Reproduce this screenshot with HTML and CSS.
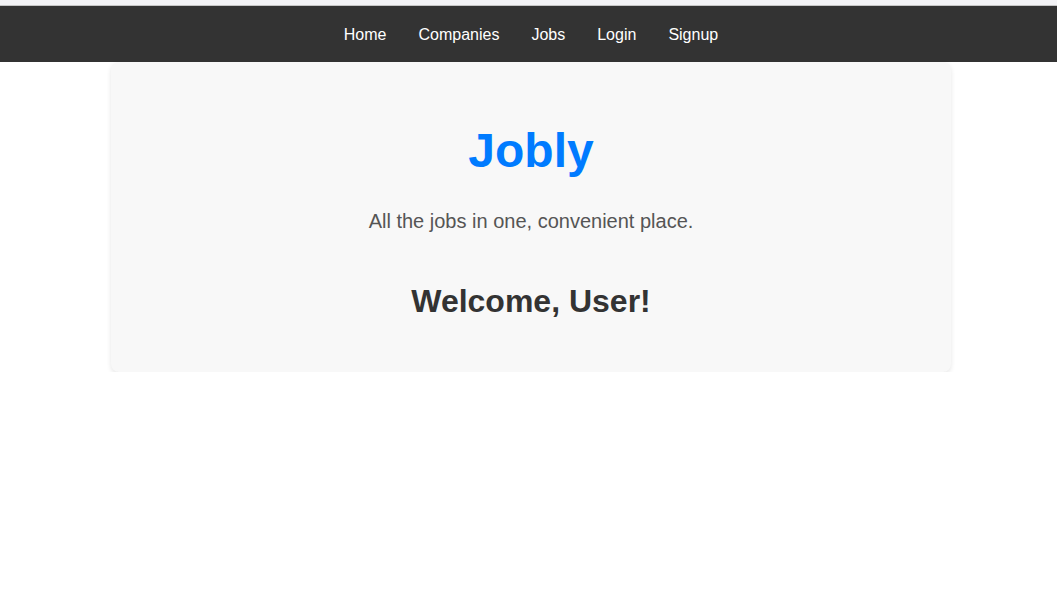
FILE: index.html
```html
<!DOCTYPE html>
<html lang="en">
<head>
<meta charset="utf-8">
<title>Jobly</title>
<link rel="stylesheet" href="styles.css">
</head>
<body>
<div class="topstrip"></div>
<nav class="navbar">
  <a class="nav-link" href="#">Home</a>
  <a class="nav-link" href="#">Companies</a>
  <a class="nav-link" href="#">Jobs</a>
  <a class="nav-link" href="#">Login</a>
  <a class="nav-link" href="#">Signup</a>
</nav>
<main class="main">
  <section class="hero">
    <h1 class="hero-title">Jobly</h1>
    <p class="hero-tagline">All the jobs in one, convenient place.</p>
    <h2 class="hero-welcome">Welcome, User!</h2>
  </section>
</main>
</body>
</html>
```

FILE: styles.css
```css
html, body {
  margin: 0;
  padding: 0;
  background: #ffffff;
  font-family: "Liberation Sans", Arial, sans-serif;
}

.topstrip {
  height: 5px;
  background: #f3f3f6;
  border-bottom: 1px solid #c6c6c6;
}

.navbar {
  height: 56px;
  box-sizing: border-box;
  background: #333333;
  display: flex;
  justify-content: center;
  align-items: center;
  padding: 2px 0 0 5px;
}

.nav-link {
  color: #ffffff;
  text-decoration: none;
  font-size: 16px;
  padding: 0 16px;
}

.main {
  display: flex;
  justify-content: center;
  padding-left: 5px;
}

.hero {
  width: 840px;
  box-sizing: border-box;
  background: #f8f8f8;
  border-radius: 8px;
  box-shadow: 0 2px 5px rgba(0, 0, 0, 0.1);
  padding: 40px 20px 52px;
  text-align: center;
}

.hero-title {
  margin: 21px 0 0;
  font-size: 48px;
  font-weight: bold;
  color: #007bff;
}

.hero-tagline {
  margin: 32px 0 0;
  font-size: 20px;
  color: #555555;
}

.hero-welcome {
  margin: 50px 0 0;
  font-size: 32px;
  font-weight: bold;
  color: #333333;
}
```
